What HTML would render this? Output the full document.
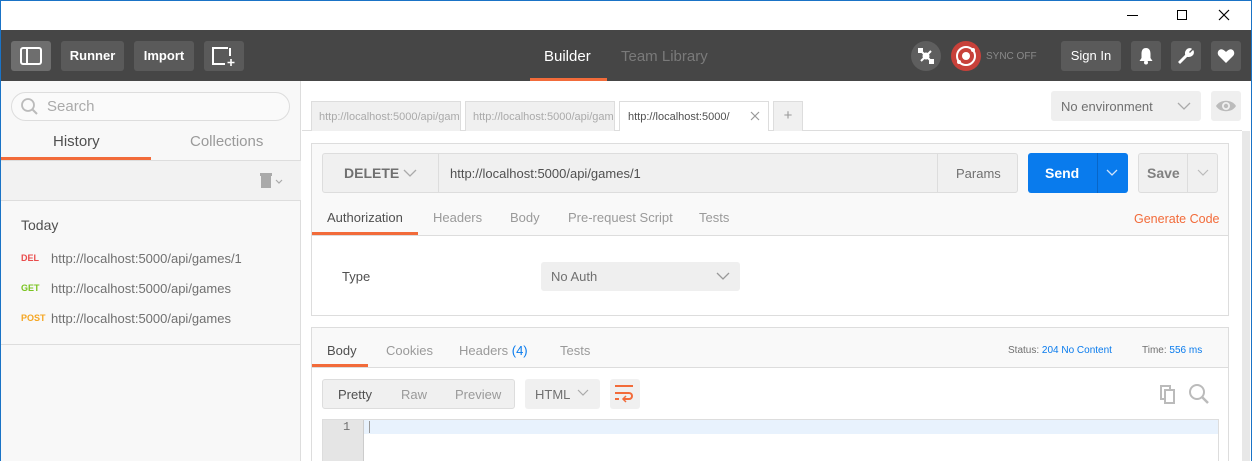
<!DOCTYPE html>
<html style="width:1252px;height:461px;overflow:hidden"><head><style>
*{box-sizing:border-box;margin:0;padding:0}
body{width:1252px;height:461px;overflow:hidden;background:#fff;font-family:"Liberation Sans",sans-serif;font-size:13px;color:#505050;position:relative}
.a{position:absolute}
.btn{position:absolute;border-radius:3px;color:#fff;font-weight:bold;font-size:13px;text-align:center;line-height:30px;height:30px}
</style></head><body>
<!-- title bar -->
<div class="a" style="left:1127px;top:15px;width:11px;height:1px;background:#000"></div>
<div class="a" style="left:1177px;top:10px;width:10px;height:10px;border:1px solid #000"></div>
<svg class="a" style="left:1218px;top:9px" width="12" height="12"><path d="M1 1L11 11M11 1L1 11" stroke="#000" stroke-width="1.2"/></svg>
<!-- top bar -->
<div class="a" style="left:0;top:30px;width:1252px;height:51px;background:#464646"></div>
<div class="btn" style="left:11px;top:41px;width:40px;background:#6e6e6e"><svg class="a" style="left:9px;top:6px" width="22" height="18"><rect x="1" y="1" width="20" height="16" rx="2" fill="none" stroke="#fff" stroke-width="2"/><path d="M7 1V17" stroke="#fff" stroke-width="2"/></svg></div>
<div class="btn" style="left:61px;top:41px;width:63px;background:#5a5a5a">Runner</div>
<div class="btn" style="left:134px;top:41px;width:60px;background:#5a5a5a">Import</div>
<div class="btn" style="left:204px;top:41px;width:40px;background:#5a5a5a"><svg class="a" style="left:8px;top:6px" width="26" height="20"><path d="M16 1H1V17H13" fill="none" stroke="#fff" stroke-width="2"/><path d="M18 1V9" stroke="#fff" stroke-width="2"/><path d="M19 12V19M15.5 15.5H22.5" stroke="#fff" stroke-width="1.6"/></svg></div>
<div class="a" style="left:544px;top:48px;color:#fff;font-size:15px">Builder</div>
<div class="a" style="left:530px;top:78px;width:77px;height:3px;background:#f26b3a"></div>
<div class="a" style="left:621px;top:48px;color:#7a7a7a;font-size:15px">Team Library</div>
<div class="a" style="left:911px;top:41px;width:30px;height:30px;border-radius:50%;background:#5e5e5e"><svg class="a" style="left:5px;top:5px" width="20" height="20"><path d="M5 5L15 15M15 5L5 15" stroke="#fff" stroke-width="2"/><rect x="2" y="2" width="5" height="5" fill="#fff"/><rect x="13" y="13" width="5" height="5" fill="#fff"/><circle cx="10" cy="10" r="3.5" fill="#fff"/></svg></div>
<div class="a" style="left:951px;top:41px;width:30px;height:30px;border-radius:50%;background:#c8413a"><svg class="a" style="left:0;top:0" width="30" height="30"><circle cx="15" cy="15" r="9" fill="none" stroke="#fff" stroke-width="2"/><circle cx="15" cy="15" r="4" fill="#fff"/><circle cx="22" cy="9" r="2" fill="#fff"/><circle cx="8" cy="21" r="2" fill="#fff"/></svg></div>
<div class="a" style="left:986px;top:51px;color:#8a8a8a;font-size:10px">SYNC OFF</div>
<div class="btn" style="left:1061px;top:41px;width:60px;background:#5a5a5a;font-weight:normal">Sign In</div>
<div class="btn" style="left:1131px;top:41px;width:30px;background:#5a5a5a"><svg class="a" style="left:7px;top:6px" width="16" height="18"><path d="M8 1C4.5 1 3.5 4 3.5 7V11L1.5 14H14.5L12.5 11V7C12.5 4 11.5 1 8 1Z" fill="#fff"/><circle cx="8" cy="15.5" r="2" fill="#fff"/></svg></div>
<div class="btn" style="left:1171px;top:41px;width:30px;background:#5a5a5a"><svg class="a" style="left:6px;top:6px" width="18" height="18"><path d="M2 15L9 8C8 5 10 1 14 2L11 5L13 7L16 4C17 8 13 10 10 9L3 16Z" fill="#fff" stroke="#fff" stroke-width="1.5" stroke-linejoin="round"/></svg></div>
<div class="btn" style="left:1211px;top:41px;width:30px;background:#5a5a5a"><svg class="a" style="left:6px;top:7px" width="18" height="16"><path d="M9 15L2 8C-1 5 2 0 5.5 1.5C7 2 8 3 9 4C10 3 11 2 12.5 1.5C16 0 19 5 16 8Z" fill="#fff"/></svg></div>
<!-- sidebar -->
<div class="a" style="left:0;top:81px;width:301px;height:380px;background:#f8f8f8;border-right:1px solid #ddd"></div>
<div class="a" style="left:11px;top:92px;width:279px;height:29px;border:1px solid #ddd;border-radius:15px;background:#fafafa"></div>
<svg class="a" style="left:20px;top:97px" width="20" height="20"><circle cx="8" cy="8" r="6" fill="none" stroke="#bbb" stroke-width="1.8"/><path d="M12.5 12.5L17 17" stroke="#bbb" stroke-width="2"/></svg>
<div class="a" style="left:47px;top:98px;color:#aaa;font-size:15px">Search</div>
<div class="a" style="left:53px;top:133px;color:#505050;font-size:15px">History</div>
<div class="a" style="left:190px;top:133px;color:#9a9a9a;font-size:15px">Collections</div>
<div class="a" style="left:0;top:157px;width:151px;height:3px;background:#f26b3a"></div>
<div class="a" style="left:0;top:160px;width:301px;height:41px;background:#f2f2f2;border-top:1px solid #ddd;border-bottom:1px solid #ddd"></div>
<svg class="a" style="left:258px;top:170px" width="30" height="20"><rect x="2" y="3" width="12" height="3" fill="#aaa"/><rect x="3" y="6" width="10" height="12" fill="#aaa"/><path d="M18 10L21 13L24 10" fill="none" stroke="#aaa" stroke-width="1.2"/></svg>
<div class="a" style="left:21px;top:217px;font-size:14px;color:#505050">Today</div>
<div class="a" style="left:21px;top:253px;font-size:9px;font-weight:bold;color:#e94c4c">DEL</div>
<div class="a" style="left:51px;top:251px;color:#707070">http://localhost:5000/api/games/1</div>
<div class="a" style="left:21px;top:283px;font-size:9px;font-weight:bold;color:#7ac420">GET</div>
<div class="a" style="left:51px;top:281px;color:#707070">http://localhost:5000/api/games</div>
<div class="a" style="left:21px;top:313px;font-size:9px;font-weight:bold;color:#f5a623">POST</div>
<div class="a" style="left:51px;top:311px;color:#707070">http://localhost:5000/api/games</div>
<div class="a" style="left:0;top:344px;width:301px;height:1px;background:#ddd"></div>
<!-- tabs -->
<div class="a" style="left:302px;top:130px;width:940px;height:1px;background:#ddd"></div>
<div class="a" style="left:311px;top:101px;width:150px;height:30px;background:#f0f0f0;border:1px solid #ddd;border-bottom:none;overflow:hidden;white-space:nowrap;padding:9px 0 0 7px;font-size:11px;color:#aaa">http://localhost:5000/api/games</div>
<div class="a" style="left:465px;top:101px;width:150px;height:30px;background:#f0f0f0;border:1px solid #ddd;border-bottom:none;overflow:hidden;white-space:nowrap;padding:9px 0 0 7px;font-size:11px;color:#aaa">http://localhost:5000/api/games</div>
<div class="a" style="left:619px;top:101px;width:150px;height:30px;background:#fff;border:1px solid #ddd;border-bottom:none;padding:9px 0 0 8px;font-size:11px;color:#505050">http://localhost:5000/</div>
<svg class="a" style="left:750px;top:111px" width="10" height="10"><path d="M1 1L9 9M9 1L1 9" stroke="#999" stroke-width="1.2"/></svg>
<div class="a" style="left:773px;top:101px;width:30px;height:30px;background:#f0f0f0;border:1px solid #ddd;border-bottom:none;text-align:center;line-height:28px;color:#999;font-size:15px">+</div>
<div class="a" style="left:1051px;top:91px;width:150px;height:30px;background:#efefef;border-radius:3px;padding:8px 10px;color:#707070">No environment</div>
<svg class="a" style="left:1177px;top:101px" width="14" height="10"><path d="M1 2L7 8L13 2" fill="none" stroke="#aaa" stroke-width="1.3"/></svg>
<div class="a" style="left:1211px;top:91px;width:30px;height:30px;background:#efefef;border-radius:3px"></div>
<svg class="a" style="left:1215px;top:98px" width="22" height="16"><path d="M1 8C5 1 17 1 21 8C17 15 5 15 1 8Z" fill="#bbb"/><circle cx="11" cy="8" r="4" fill="#efefef"/><circle cx="11" cy="8" r="2.2" fill="#bbb"/></svg>
<div class="a" style="left:1242px;top:131px;width:8px;height:330px;background:#e8e8e8"></div>
<!-- request box -->
<div class="a" style="left:311px;top:143px;width:918px;height:173px;background:#fff;border:1px solid #ddd"></div>
<div class="a" style="left:312px;top:144px;width:916px;height:92px;background:#f9f9f9;border-bottom:1px solid #ddd"></div>
<div class="a" style="left:322px;top:153px;width:696px;height:40px;background:#f0f0f0;border:1px solid #ddd;border-radius:3px"></div>
<div class="a" style="left:438px;top:154px;width:1px;height:38px;background:#ddd"></div>
<div class="a" style="left:937px;top:154px;width:1px;height:38px;background:#ddd"></div>
<div class="a" style="left:344px;top:165px;font-weight:bold;font-size:14px;color:#707070">DELETE</div>
<svg class="a" style="left:403px;top:169px" width="14" height="9"><path d="M1 1L7 7L13 1" fill="none" stroke="#aaa" stroke-width="1.3"/></svg>
<div class="a" style="left:450px;top:166px;color:#505050">http://localhost:5000/api/games/1</div>
<div class="a" style="left:956px;top:166px;color:#707070">Params</div>
<div class="a" style="left:1028px;top:153px;width:100px;height:40px;background:#097bed;border-radius:3px"></div>
<div class="a" style="left:1097px;top:153px;width:1px;height:40px;background:#0866c8"></div>
<div class="a" style="left:1045px;top:165px;color:#fff;font-weight:bold;font-size:14px">Send</div>
<svg class="a" style="left:1106px;top:169px" width="12" height="8"><path d="M1 1L6 6L11 1" fill="none" stroke="#cfe3fa" stroke-width="1.3"/></svg>
<div class="a" style="left:1138px;top:153px;width:80px;height:40px;background:#f0f0f0;border:1px solid #ddd;border-radius:3px"></div>
<div class="a" style="left:1187px;top:154px;width:1px;height:38px;background:#ddd"></div>
<div class="a" style="left:1147px;top:165px;color:#808080;font-weight:bold;font-size:14px">Save</div>
<svg class="a" style="left:1197px;top:169px" width="12" height="8"><path d="M1 1L6 6L11 1" fill="none" stroke="#bbb" stroke-width="1.2"/></svg>
<div class="a" style="left:327px;top:210px;color:#505050">Authorization</div>
<div class="a" style="left:433px;top:210px;color:#9a9a9a">Headers</div>
<div class="a" style="left:510px;top:210px;color:#9a9a9a">Body</div>
<div class="a" style="left:568px;top:210px;color:#9a9a9a">Pre-request Script</div>
<div class="a" style="left:699px;top:210px;color:#9a9a9a">Tests</div>
<div class="a" style="left:1134px;top:212px;color:#f26b3a;font-size:12.5px">Generate Code</div>
<div class="a" style="left:312px;top:232px;width:106px;height:3px;background:#f26b3a"></div>
<div class="a" style="left:342px;top:269px;color:#505050">Type</div>
<div class="a" style="left:541px;top:262px;width:199px;height:29px;background:#efefef;border-radius:3px;padding:7px 10px;color:#707070">No Auth</div>
<svg class="a" style="left:716px;top:272px" width="14" height="9"><path d="M1 1L7 7L13 1" fill="none" stroke="#999" stroke-width="1.3"/></svg>
<!-- response -->
<div class="a" style="left:311px;top:327px;width:918px;height:134px;background:#fff;border:1px solid #ddd;border-bottom:none"></div>
<div class="a" style="left:312px;top:328px;width:916px;height:40px;background:#f9f9f9;border-bottom:1px solid #ddd"></div>
<div class="a" style="left:327px;top:343px;color:#505050">Body</div>
<div class="a" style="left:386px;top:343px;color:#9a9a9a">Cookies</div>
<div class="a" style="left:459px;top:343px;color:#9a9a9a">Headers <span style="color:#097bed">(4)</span></div>
<div class="a" style="left:560px;top:343px;color:#9a9a9a">Tests</div>
<div class="a" style="left:312px;top:364px;width:56px;height:3px;background:#f26b3a"></div>
<div class="a" style="left:1008px;top:345px;font-size:10px;color:#707070">Status: <span style="color:#097bed">204 No Content</span></div>
<div class="a" style="left:1142px;top:345px;font-size:10px;color:#707070">Time: <span style="color:#097bed">556 ms</span></div>
<div class="a" style="left:322px;top:379px;width:193px;height:30px;background:#f0f0f0;border:1px solid #ddd;border-radius:3px"></div>
<div class="a" style="left:338px;top:387px;color:#505050">Pretty</div>
<div class="a" style="left:401px;top:387px;color:#9a9a9a">Raw</div>
<div class="a" style="left:455px;top:387px;color:#9a9a9a">Preview</div>
<div class="a" style="left:525px;top:379px;width:75px;height:30px;background:#f0f0f0;border-radius:3px;padding:8px 10px;color:#707070">HTML</div>
<svg class="a" style="left:577px;top:389px" width="12" height="8"><path d="M1 1L6 6L11 1" fill="none" stroke="#aaa" stroke-width="1.2"/></svg>
<div class="a" style="left:610px;top:379px;width:30px;height:30px;background:#f0f0f0;border-radius:3px"></div>
<svg class="a" style="left:614px;top:384px" width="22" height="20"><path d="M1 2H19" stroke="#f26b3a" stroke-width="2"/><path d="M1 9H15C19 9 19 15 15 15H10" fill="none" stroke="#f26b3a" stroke-width="2"/><path d="M12 12L9 15L12 18" fill="none" stroke="#f26b3a" stroke-width="1.5"/><path d="M1 15H5" stroke="#f26b3a" stroke-width="2"/></svg>
<svg class="a" style="left:1159px;top:384px" width="20" height="22"><rect x="2" y="2" width="9" height="13" fill="none" stroke="#bbb" stroke-width="2"/><rect x="6" y="6" width="9" height="13" fill="#fff" stroke="#bbb" stroke-width="2"/></svg>
<svg class="a" style="left:1188px;top:383px" width="22" height="22"><circle cx="9" cy="9" r="7" fill="none" stroke="#bbb" stroke-width="2"/><path d="M14 14L20 20" stroke="#bbb" stroke-width="2.5"/></svg>
<div class="a" style="left:322px;top:419px;width:897px;height:42px;border:1px solid #ddd;border-bottom:none"></div>
<div class="a" style="left:323px;top:420px;width:41px;height:41px;background:#e5e5e5;border-right:1px solid #ccc"></div>
<div class="a" style="left:364px;top:420px;width:854px;height:14px;background:#e8f2fd"></div>
<div class="a" style="left:343px;top:420px;font-size:12px;color:#707070;font-family:'Liberation Mono',monospace">1</div>
<div class="a" style="left:369px;top:421px;width:1px;height:12px;background:#999"></div>
<!-- window border -->
<div class="a" style="left:0;top:0;width:1252px;height:461px;border:1px solid #1a73c6;border-bottom:none;z-index:50;pointer-events:none"></div>
</body></html>
